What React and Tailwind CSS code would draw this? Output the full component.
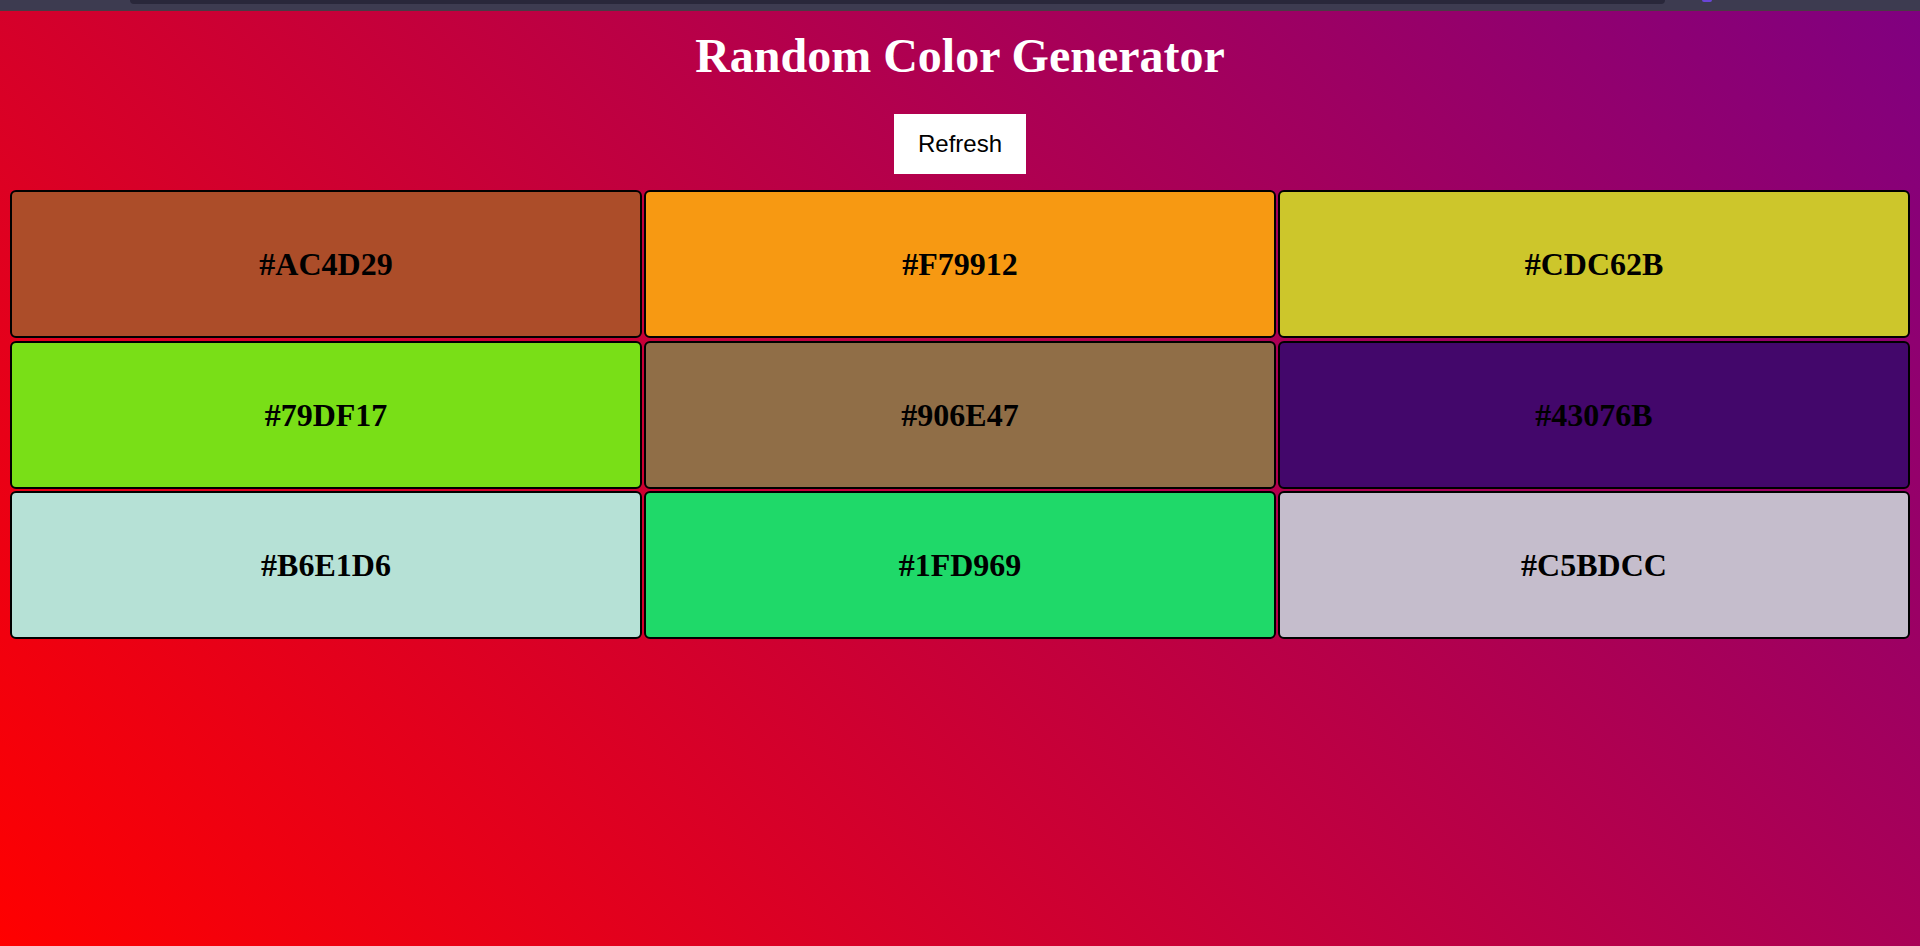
import { useState } from 'react'

const initialColors = [
  '#AC4D29',
  '#F79912',
  '#CDC62B',
  '#79DF17',
  '#906E47',
  '#43076B',
  '#B6E1D6',
  '#1FD969',
  '#C5BDCC',
]

function randomHex() {
  const n = Math.floor(Math.random() * 0xffffff)
  return '#' + n.toString(16).padStart(6, '0').toUpperCase()
}

function ColorBox({ color }) {
  return (
    <div
      className="h-[148px] flex items-center justify-center border-2 border-black rounded-[6px]"
      style={{ backgroundColor: color }}
    >
      <span className="font-['Liberation_Serif',serif] font-bold text-[32px] leading-none text-black">
        {color}
      </span>
    </div>
  )
}

export default function App() {
  const [colors, setColors] = useState(initialColors)

  const handleRefresh = () => {
    setColors(colors.map(() => randomHex()))
  }

  return (
    <div className="min-h-screen flex flex-col">
      {/* browser strip at top */}
      <div className="h-[10px] bg-[#3d3b50] flex items-start pl-[130px]">
        <div className="w-[1535px] h-[4px] bg-[#29273a] rounded-b-[6px]"></div>
        <div className="ml-[37px] w-[10px] h-[2px] bg-[#6a45d8] rounded-b-full"></div>
      </div>
      <div className="h-[1px] bg-[#4a3a44]"></div>

      <div className="flex-1 bg-[linear-gradient(45deg,red,purple)] pt-[18px] px-[10px]">
        <h1 className="text-center text-white font-['Liberation_Serif',serif] font-bold text-[48px] leading-[53px]">
          Random Color Generator
        </h1>

        <div className="flex justify-center mt-[32px]">
          <button
            onClick={handleRefresh}
            className="w-[132px] h-[60px] bg-white text-black font-['Liberation_Sans',sans-serif] text-[24px] leading-[28px]"
          >
            Refresh
          </button>
        </div>

        <div className="grid grid-cols-3 gap-x-[2px] gap-y-[2.5px] mt-[16px]">
          {colors.map((c, i) => (
            <ColorBox key={i} color={c} />
          ))}
        </div>
      </div>
    </div>
  )
}
